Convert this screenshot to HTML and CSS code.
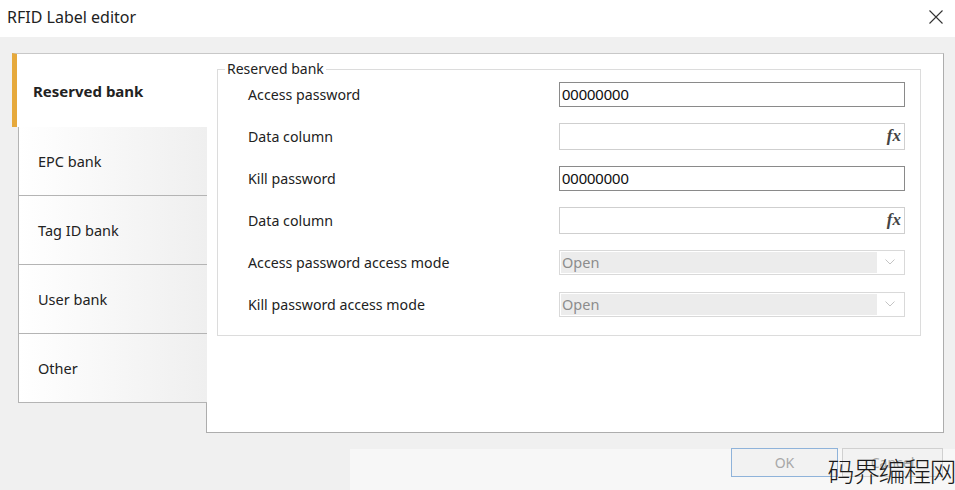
FILE: index.html
```html
<!DOCTYPE html>
<html lang="en">
<head>
  <meta charset="UTF-8">
  <meta name="viewport" content="width=device-width, initial-scale=1.0">
  <title>RFID Label editor</title>
  <link rel="stylesheet" href="styles.css">
</head>
<body>
  <div class="titlebar">
    <span class="title">RFID Label editor</span>
    <svg class="close" width="14" height="14" viewBox="0 0 14 14">
      <path d="M0.5 0.5 L13.5 13.5 M13.5 0.5 L0.5 13.5" stroke="#333" stroke-width="1.1" fill="none"/>
    </svg>
  </div>

  <div class="editor">
    <div class="tabs">
      <div class="tab tab-active">Reserved bank</div>
      <div class="tab">EPC bank</div>
      <div class="tab">Tag ID bank</div>
      <div class="tab">User bank</div>
      <div class="tab">Other</div>
    </div>

    <div class="panel">
      <fieldset class="group">
        <legend>Reserved bank</legend>
        <div class="rows">
          <div class="row">
            <label>Access password</label>
            <div class="field field-text">00000000</div>
          </div>
          <div class="row">
            <label>Data column</label>
            <div class="field field-fx"><span class="fx">fx</span></div>
          </div>
          <div class="row">
            <label>Kill password</label>
            <div class="field field-text">00000000</div>
          </div>
          <div class="row">
            <label>Data column</label>
            <div class="field field-fx"><span class="fx">fx</span></div>
          </div>
          <div class="row">
            <label>Access password access mode</label>
            <div class="field field-select">
              <span class="select-value">Open</span>
              <span class="select-arrow">
                <svg width="10" height="6" viewBox="0 0 10 6"><path d="M0.5 0.5 L5 5 L9.5 0.5" stroke="#c4c4c4" fill="none"/></svg>
              </span>
            </div>
          </div>
          <div class="row">
            <label>Kill password access mode</label>
            <div class="field field-select">
              <span class="select-value">Open</span>
              <span class="select-arrow">
                <svg width="10" height="6" viewBox="0 0 10 6"><path d="M0.5 0.5 L5 5 L9.5 0.5" stroke="#c4c4c4" fill="none"/></svg>
              </span>
            </div>
          </div>
        </div>
      </fieldset>
    </div>
  </div>

  <div class="footer">
    <button class="btn btn-ok">OK</button>
    <button class="btn btn-cancel">Cancel</button>
  </div>

  <div class="watermark">码界编程网</div>
</body>
</html>
```

FILE: styles.css
```css
body {
  margin: 0;
  width: 955px;
  height: 490px;
  overflow: hidden;
  background: #f0f0f0;
  font-family: 'Noto Sans', sans-serif;
  color: #222;
  position: relative;
}

.titlebar {
  height: 37px;
  background: #fff;
  display: flex;
  align-items: center;
  justify-content: space-between;
  padding: 0 12px 3px 7px;
  box-sizing: border-box;
}

.title {
  font-size: 16px;
}

.editor {
  display: flex;
  padding: 16px 0 0 12px;
}

.tabs {
  width: 195px;
  margin-right: -1px;
  position: relative;
  z-index: 1;
  padding-top: 1px;
}

.tab {
  height: 69px;
  margin-left: 6px;
  border: 1px solid #b4b4b4;
  border-top: none;
  border-right: none;
  background: linear-gradient(90deg, #fff, #efefef);
  display: flex;
  align-items: center;
  padding-left: 19px;
  font-size: 14.5px;
}

.tab-active {
  height: 74px;
  margin-left: 0;
  margin-top: -1px;
  border: none;
  border-top: 1px solid #c8c8c8;
  border-left: 5px solid #e6a93c;
  background: #fff;
  padding-left: 16px;
  font-size: 15px;
  font-weight: bold;
  box-sizing: border-box;
}

.tab + .tab {
  box-sizing: border-box;
}

.panel {
  width: 738px;
  height: 380px;
  box-sizing: border-box;
  background: #fff;
  border: 1px solid #adadad;
  border-top-color: #c8c8c8;
  padding: 8px 22px 0 10px;
}

.group {
  margin: 0;
  border: 1px solid #dcdcdc;
  padding: 0 15px 10px 7px;
}

.group legend {
  font-size: 14px;
  line-height: 14px;
  padding: 0 2px;
}

.rows {
  margin-top: -3px;
}

.row {
  height: 42px;
  display: grid;
  grid-template-columns: 1fr 346px;
  align-items: center;
  padding-left: 23px;
}

.row label {
  font-size: 14.2px;
}

.field {
  box-sizing: border-box;
  height: 25px;
  display: flex;
  align-items: center;
}

.field-text {
  border: 1px solid #8a8a8a;
  padding-left: 2px;
  font-family: 'Liberation Sans', sans-serif;
  font-size: 15px;
  color: #111;
}

.field-fx {
  height: 27px;
  border: 1px solid #cfcfcf;
  justify-content: flex-end;
  padding-right: 3px;
}

.fx {
  font-family: 'Liberation Serif', serif;
  font-style: italic;
  font-weight: bold;
  font-size: 17px;
  color: #444;
}

.field-select {
  border: 1px solid #d9d9d9;
  background: #fff;
  padding: 1px;
}

.select-value {
  flex: 1;
  align-self: stretch;
  background: #ececec;
  display: flex;
  align-items: center;
  padding-left: 1px;
  font-size: 14.5px;
  color: #8c8c8c;
}

.select-arrow {
  width: 26px;
  display: flex;
  justify-content: center;
  align-items: center;
}

.footer {
  margin: 16px 0 0 350px;
  height: 41px;
  background: #f7f7f7;
  display: flex;
  justify-content: flex-end;
  gap: 4px;
  padding-right: 12px;
}

.btn {
  width: 107px;
  height: 29px;
  margin-top: -1px;
  background: #f2f2f2;
  border: 1px solid #d0d0d0;
  font-family: 'Noto Sans', sans-serif;
  font-size: 14px;
  color: #a8a8a8;
}

.btn-ok {
  border-color: #8fb3da;
}

.btn-cancel {
  width: 101px;
}

.watermark {
  position: absolute;
  right: 0;
  bottom: 3px;
  font-family: 'Noto Sans CJK SC', sans-serif;
  font-weight: 300;
  font-size: 27px;
  line-height: 32px;
  color: #1a1a1a;
  letter-spacing: -1.5px;
}
```
